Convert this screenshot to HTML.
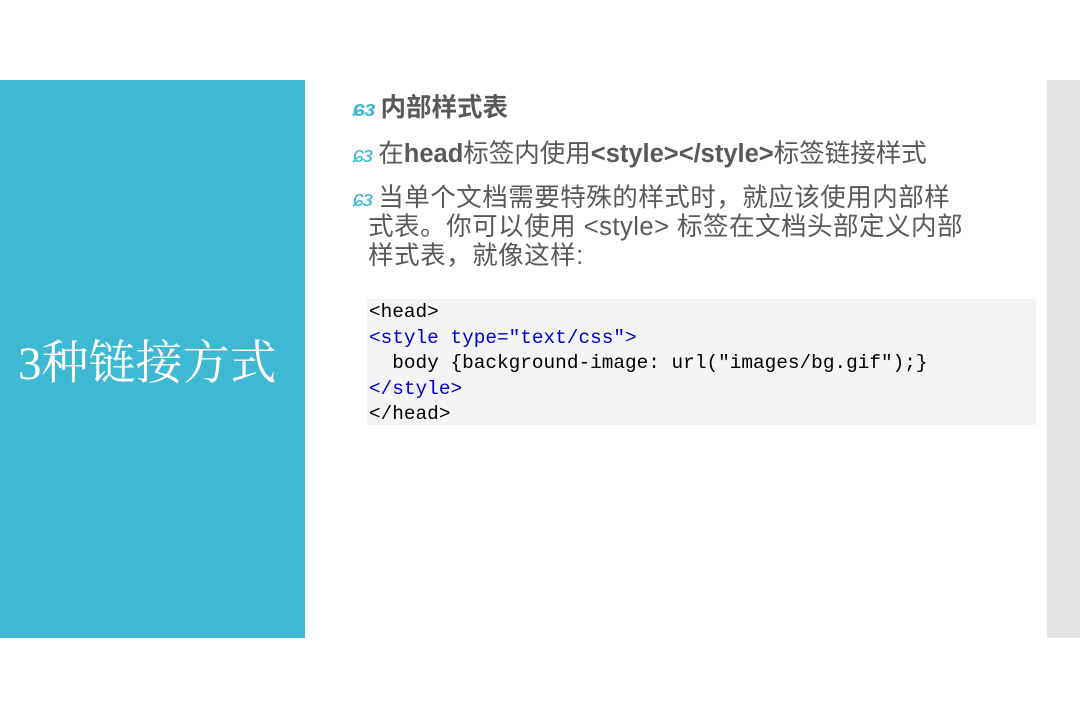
<!DOCTYPE html>
<html><head><meta charset="utf-8"><style>
body{margin:0;width:1080px;height:720px;background:#fff;position:relative;overflow:hidden;font-family:"Liberation Sans","Noto Sans CJK SC",sans-serif;}
.left{position:absolute;left:0;top:80px;width:305px;height:558px;background:#3fb8d3;}
.title{position:absolute;left:18px;top:326px;color:#fff;font-size:47px;font-family:"Liberation Serif","Noto Serif CJK SC",serif;white-space:nowrap;}
.right{position:absolute;left:1047px;top:80px;width:33px;height:558px;background:#e4e4e4;}
.p{position:absolute;left:353px;color:#595959;font-size:25.5px;line-height:29px;white-space:nowrap;}
.b{color:#3fb8d3;font-size:22px;font-style:italic;letter-spacing:-1px;margin-right:6px;}
.code{position:absolute;left:367px;top:299px;width:669px;height:126px;background:#f4f4f4;}
pre{margin:0;position:absolute;left:369px;top:300px;font-family:"Liberation Mono",monospace;font-size:19.4px;line-height:25.5px;color:#000;}
.k{color:#0000cd;}
</style></head><body>
<div class="left"></div>
<div class="title">3种链接方式</div>
<div class="right"></div>
<div class="p" style="top:94px;font-weight:bold"><span class="b">ɕз</span>内部样式表</div>
<div class="p" style="top:140px"><span class="b">ɕз</span>在<b>head</b>标签内使用<b>&lt;style&gt;&lt;/style&gt;</b>标签链接样式</div>
<div class="p" style="top:184px;letter-spacing:0.5px"><span class="b">ɕз</span>当单个文档需要特殊的样式时，就应该使用内部样<br>&nbsp;&nbsp;式表。你可以使用 &lt;style&gt; 标签在文档头部定义内部<br>&nbsp;&nbsp;样式表，就像这样:</div>
<div class="code"></div>
<pre>&lt;head&gt;
<span class="k">&lt;style type="text/css"&gt;</span>
  body {background-image: url("images/bg.gif");}
<span class="k">&lt;/style&gt;</span>
&lt;/head&gt;</pre>
</body></html>
